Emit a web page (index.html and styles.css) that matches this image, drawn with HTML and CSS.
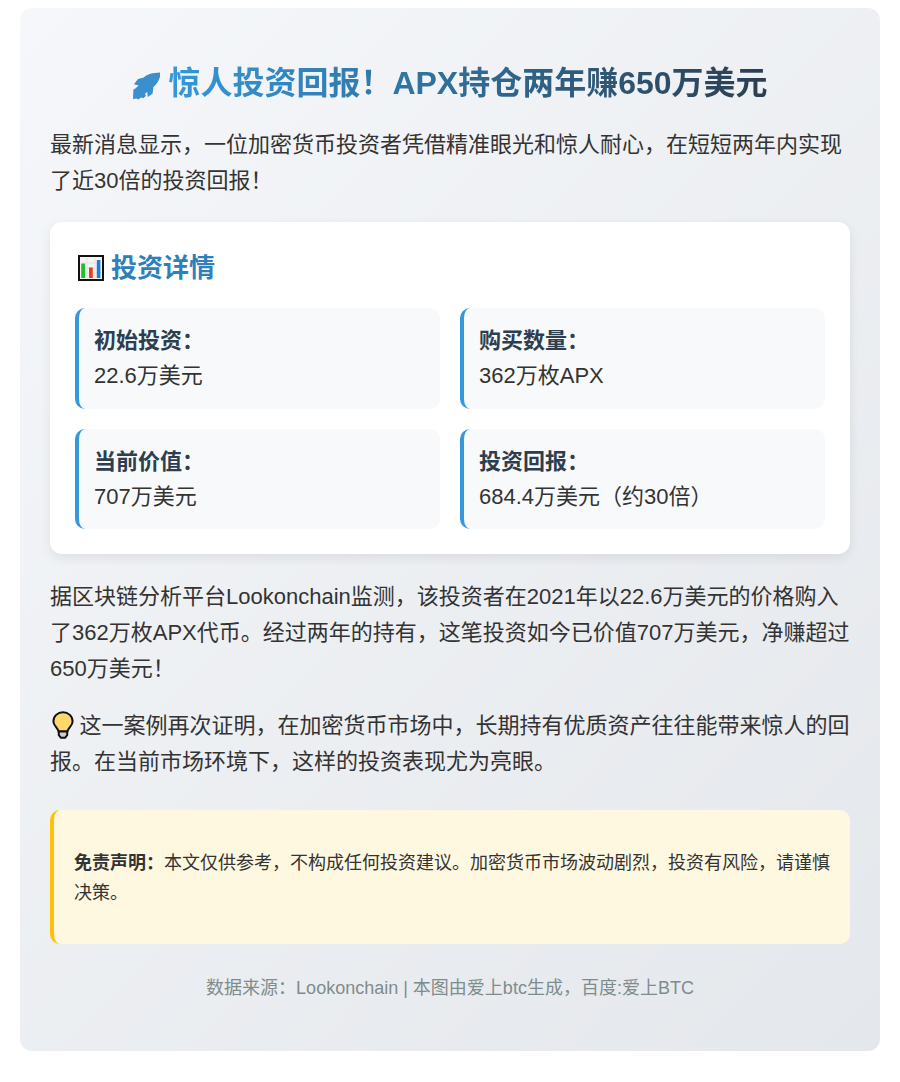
FILE: index.html
```html
<!DOCTYPE html>
<html lang="zh-CN">
<head>
<meta charset="utf-8">
<title>惊人投资回报</title>
<link rel="stylesheet" href="styles.css">
</head>
<body>
<main class="container">
  <h1 class="title"><svg class="rocket" viewBox="-1 0 28 28" aria-hidden="true"><path d="M27.7 0.6C20 0.8 14.5 2.2 10.8 5.4L5 7L1 12.3L5.6 13.4L2.4 16.4L0.4 17.4L0 27L3.6 26.4L5.4 27.4L8 25.4L10.4 26.2L12.8 24L12.2 21.4L14.2 20L14.8 25L19.6 21.4L20.4 15C25 11 27.2 6.6 27.7 0.6Z"/></svg> <span class="title-text">惊人投资回报！APX持仓两年赚650万美元</span></h1>
  <p class="para lead">最新消息显示，一位加密货币投资者凭借精准眼光和惊人耐心，在短短两年内实现了近30倍的投资回报！</p>
  <section class="card">
    <h2 class="card-title"><svg class="chart" viewBox="0 0 26 26" aria-hidden="true"><rect x="1" y="1" width="24" height="24" fill="#f4f4f4" stroke="#111" stroke-width="2"/><path d="M3 8H23M3 13H23M3 18H23M9 3V23M17 3V23" stroke="#e3e3e3" stroke-width="1"/><rect x="3.2" y="8.5" width="3.8" height="14.5" fill="#22c02a"/><rect x="11" y="12.5" width="3.8" height="10.5" fill="#e8401c"/><rect x="18.8" y="5" width="3.6" height="18" fill="#1580e0"/></svg> 投资详情</h2>
    <div class="grid">
      <div class="item"><strong class="label">初始投资：</strong><span class="value">22.6万美元</span></div>
      <div class="item"><strong class="label">购买数量：</strong><span class="value">362万枚APX</span></div>
      <div class="item"><strong class="label">当前价值：</strong><span class="value">707万美元</span></div>
      <div class="item"><strong class="label">投资回报：</strong><span class="value">684.4万美元（约30倍）</span></div>
    </div>
  </section>
  <p class="para">据区块链分析平台Lookonchain监测，该投资者在2021年以22.6万美元的价格购入了362万枚APX代币。经过两年的持有，这笔投资如今已价值707万美元，净赚超过650万美元！</p>
  <p class="para"><svg class="bulb" viewBox="0 0 22 28" aria-hidden="true"><path d="M11 1.2C5.6 1.2 1.4 5.2 1.4 10.4C1.4 14.6 5.4 16.6 6.6 20.4H15.4C16.6 16.6 20.6 14.6 20.6 10.4C20.6 5.2 16.4 1.2 11 1.2Z" fill="#ffd76a" stroke="#111" stroke-width="2"/><path d="M6.8 20.4H15.2V24.2L13 26.8H9L6.8 24.2Z" fill="#cfcfcf" stroke="#111" stroke-width="2" stroke-linejoin="round"/></svg> 这一案例再次证明，在加密货币市场中，长期持有优质资产往往能带来惊人的回报。在当前市场环境下，这样的投资表现尤为亮眼。</p>
  <aside class="notice"><strong class="notice-label">免责声明：</strong>本文仅供参考，不构成任何投资建议。加密货币市场波动剧烈，投资有风险，请谨慎决策。</aside>
  <footer class="source">数据来源：Lookonchain | 本图由爱上btc生成，百度:爱上BTC</footer>
</main>
</body>
</html>
```
FILE: styles.css
```css
* { box-sizing: border-box; }
html, body { margin: 0; background: #fff; }
body {
  padding: 8px 20px 0;
  font-family: "Liberation Sans", "Noto Sans CJK SC", sans-serif;
  color: #333;
}
.container {
  height: 1043px;
  padding: 30px;
  border-radius: 12px;
  background: linear-gradient(135deg, #f5f7fa 0%, #e4e7eb 100%);
}
.title {
  display: flex;
  justify-content: center;
  align-items: center;
  gap: 8px;
  margin: 24px 0 23px;
  height: 42px;
  font-size: 32px;
  line-height: 42px;
  font-weight: 700;
}
.title-text {
  background: linear-gradient(90deg, #3498db, #2c3e50);
  -webkit-background-clip: text;
  background-clip: text;
  color: transparent;
}
.rocket { width: 28px; height: 28px; fill: #3a8fcc; margin-top: 6px; }
.para {
  margin: 0 0 21px;
  font-size: 22px;
  line-height: 36px;
}
.lead { margin-bottom: 23px; }
.card {
  margin: 0 0 25px;
  padding: 25px;
  height: 332px;
  background: #fff;
  border-radius: 12px;
  box-shadow: 0 4px 12px rgba(0,0,0,.08);
}
.card-title {
  display: flex;
  align-items: center;
  gap: 7px;
  margin: 1px 0 20px;
  padding-left: 3px;
  height: 40px;
  font-size: 26px;
  line-height: 40px;
  color: #2f80b9;
}
.chart { width: 26px; height: 26px; }
.grid {
  display: grid;
  grid-template-columns: 1fr 1fr;
  gap: 20px;
}
.item {
  height: 101px;
  padding: 15px;
  background: #f8f9fa;
  border-left: 4px solid #3498db;
  border-radius: 10px;
  font-size: 22px;
}
.item:nth-child(n+3) { height: 100px; }
.label { display: block; font-size: 22px; line-height: 35px; color: #2c3e50; }
.value { display: block; line-height: 36px; color: #333; }
.bulb { width: 22px; height: 28px; margin-left: 1.5px; vertical-align: -6px; }
.notice {
  margin-top: 30px;
  padding: 38px 20px;
  height: 134px;
  background: #fff8e1;
  border-left: 4px solid #ffc107;
  border-radius: 10px;
  font-size: 18px;
  line-height: 30px;
}
.notice-label { color: #333; }
.source {
  margin-top: 29px;
  text-align: center;
  font-size: 18px;
  line-height: 30px;
  color: #7f8c8d;
}
```
